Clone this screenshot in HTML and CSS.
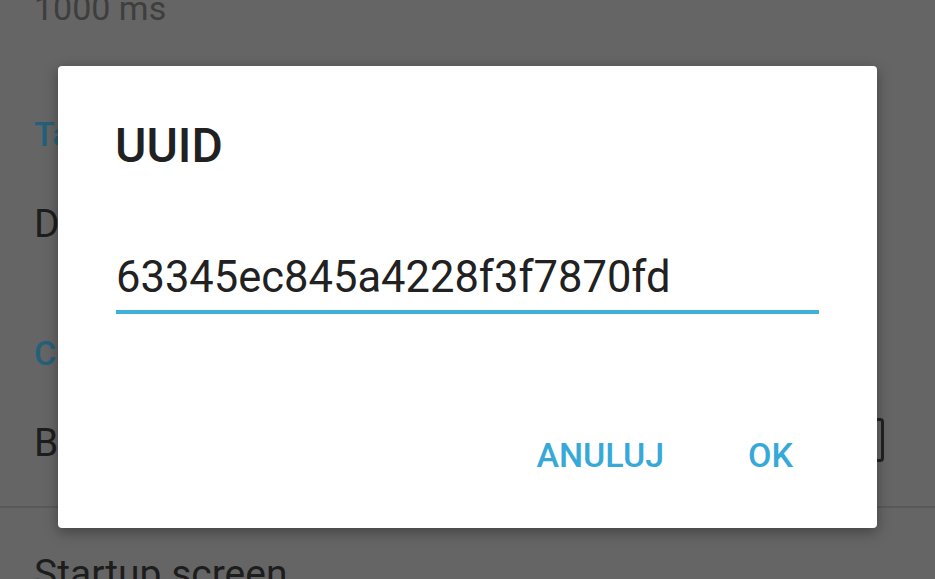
FILE: index.html
```html
<!DOCTYPE html>
<html lang="pl">
<head>
<meta charset="utf-8">
<title>UUID</title>
<link rel="stylesheet" href="styles.css">
</head>
<body>
<div class="screen">
  <div class="settings">
    <div class="summary first">1000 ms</div>
    <div class="category cat-tag">Tag</div>
    <div class="title row-d">Device UUID</div>
    <div class="category cat-c">Connection</div>
    <div class="title row-b">Background scan</div>
    <div class="divider"></div>
    <div class="title row-s">Startup screen</div>
  </div>
  <div class="checkbox"></div>
  <div class="dialog">
    <div class="dialog-title">UUID</div>
    <div class="field">
      <div class="field-text">63345ec845a4228f3f7870fd</div>
      <div class="field-line"></div>
    </div>
    <div class="actions">
      <span class="btn">ANULUJ</span>
      <span class="btn">OK</span>
    </div>
  </div>
</div>
</body>
</html>
```

FILE: styles.css
```css
html, body {
  margin: 0;
  padding: 0;
  width: 935px;
  height: 579px;
  overflow: hidden;
  background: #656565;
  font-family: Roboto, "Noto Sans", sans-serif;
}

.screen {
  position: relative;
  width: 935px;
  height: 579px;
  overflow: hidden;
}

.settings {
  display: flex;
  flex-direction: column;
  padding-left: 34px;
  white-space: nowrap;
}

.summary {
  font-size: 34px;
  line-height: 34px;
  color: #3e3e3e;
}

.first { margin-top: -9px; }

.category {
  font-size: 34px;
  line-height: 34px;
  font-weight: 500;
  color: #24607a;
}

.title {
  font-size: 39px;
  line-height: 39px;
  color: #1d1d1d;
}

.cat-tag { margin-top: 92px; }
.row-d { margin-top: 54px; }
.cat-c { margin-top: 92px; }
.row-b { margin-top: 54px; }

.divider {
  margin-left: -34px;
  margin-top: 43px;
  height: 2px;
  background: #595959;
}

.row-s { margin-top: 47px; }

.checkbox {
  position: absolute;
  left: 840px;
  top: 418px;
  width: 38px;
  height: 38px;
  border: 3px solid #222;
  border-radius: 4px;
}

.dialog {
  position: absolute;
  left: 58px;
  top: 66px;
  width: 703px;
  height: 406px;
  padding: 56px 58px 0 58px;
  background: #ffffff;
  border-radius: 4px;
  box-shadow: 0 4px 14px rgba(0, 0, 0, 0.35);
  display: flex;
  flex-direction: column;
}

.dialog-title {
  font-size: 48px;
  line-height: 48px;
  font-weight: 500;
  color: #212121;
  margin-left: -1px;
}

.field {
  margin-top: 86px;
  display: flex;
  flex-direction: column;
}

.field-text {
  font-size: 43.5px;
  line-height: 44px;
  color: #212121;
}

.field-line {
  margin-top: 10px;
  height: 4px;
  background: #40b0da;
}

.actions {
  margin-top: 124px;
  margin-right: 26px;
  display: flex;
  justify-content: flex-end;
  gap: 84px;
}

.btn {
  font-size: 34px;
  line-height: 34px;
  font-weight: 500;
  color: #37a9d9;
}
```
